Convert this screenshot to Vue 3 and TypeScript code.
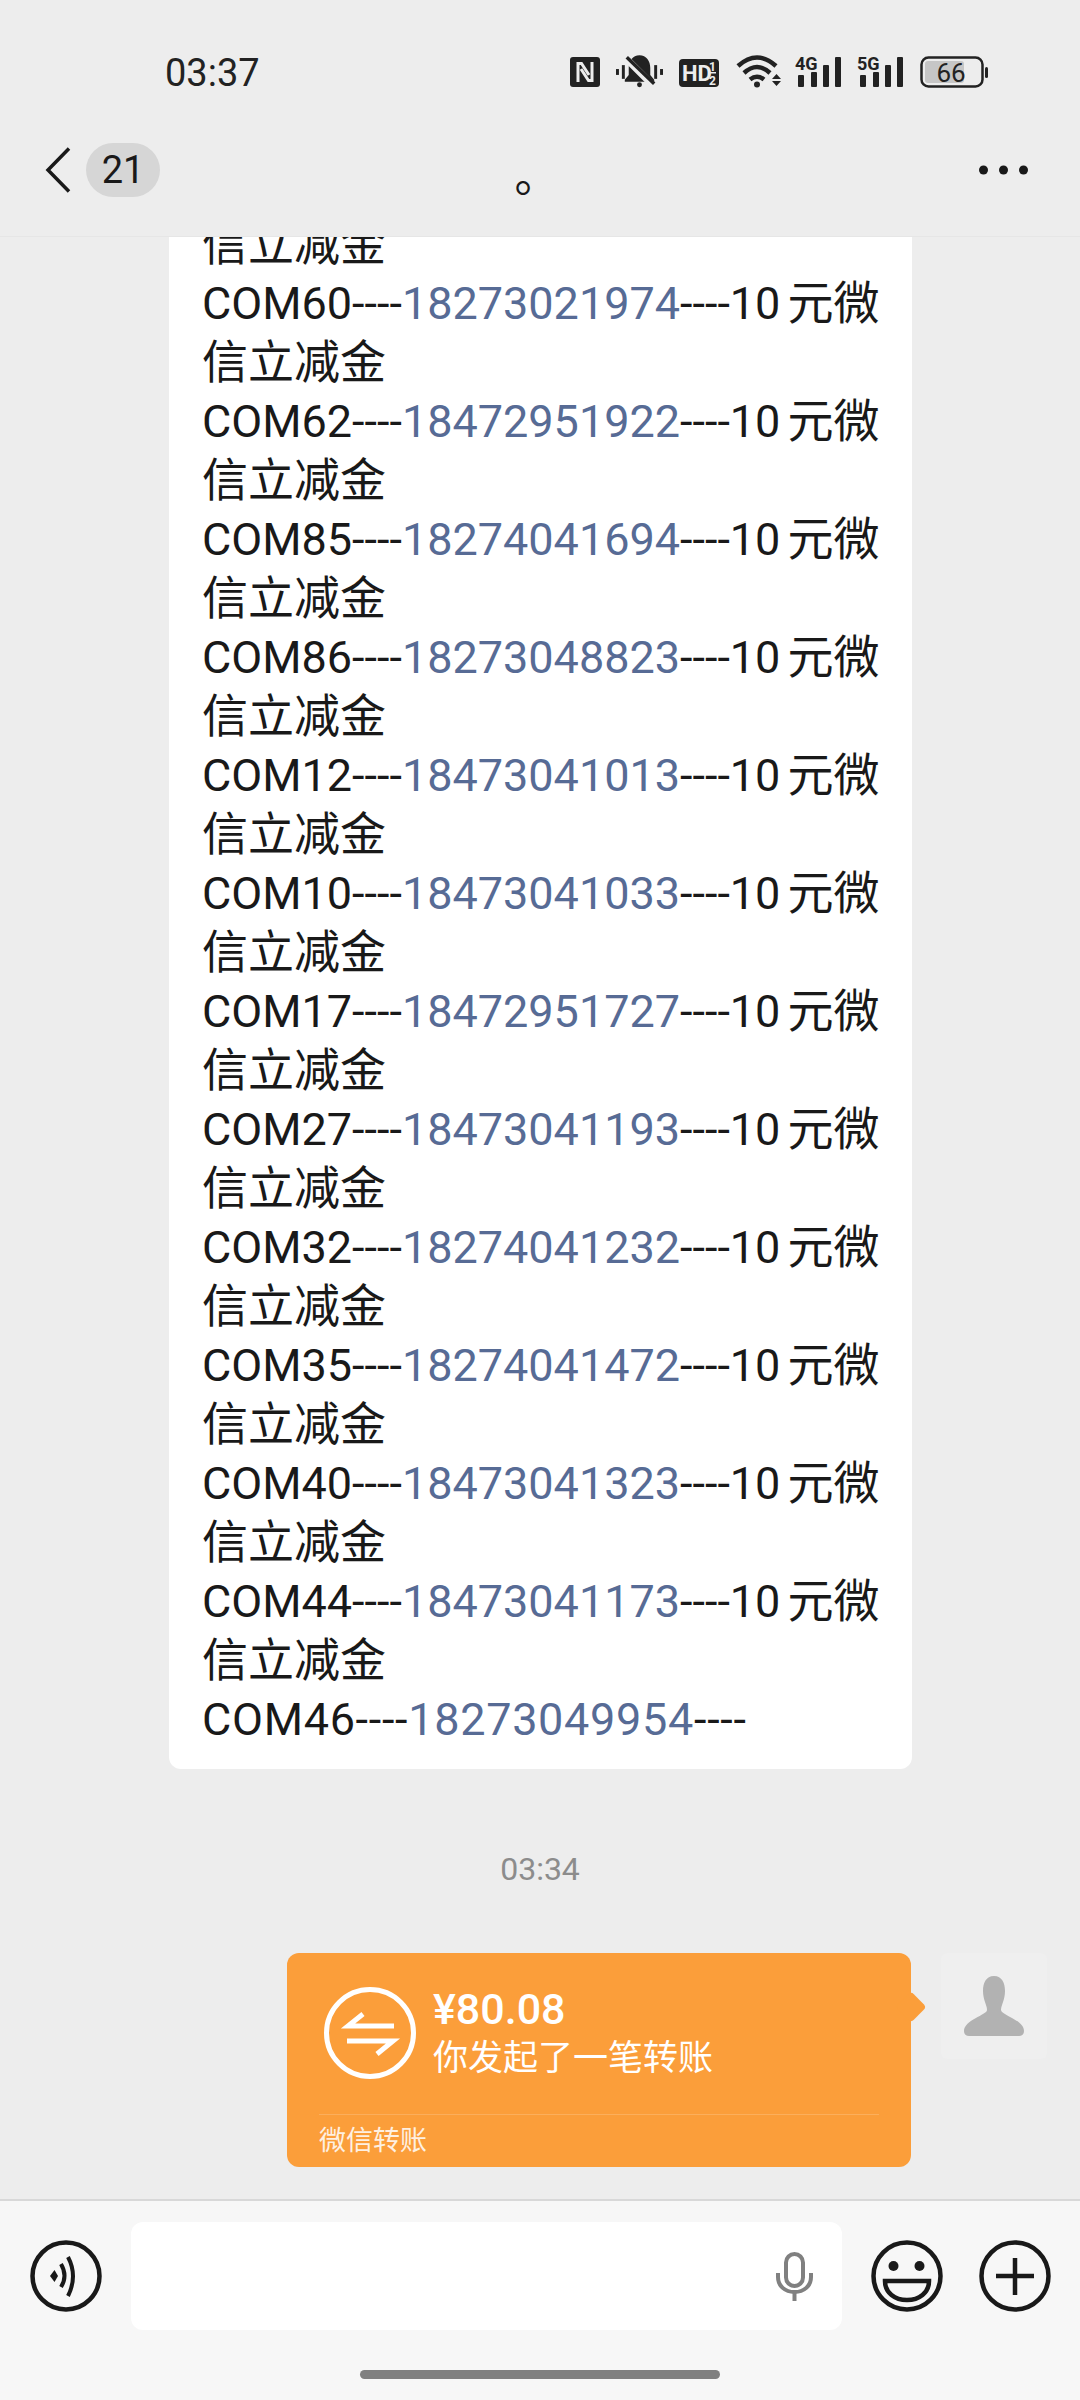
<script setup lang="ts">
interface Row {
  code: string;
  phone: string;
  hasPrize: boolean;
}

const rows: Row[] = [
  { code: "COM59", phone: "", hasPrize: true },
  { code: "COM60", phone: "18273021974", hasPrize: true },
  { code: "COM62", phone: "18472951922", hasPrize: true },
  { code: "COM85", phone: "18274041694", hasPrize: true },
  { code: "COM86", phone: "18273048823", hasPrize: true },
  { code: "COM12", phone: "18473041013", hasPrize: true },
  { code: "COM10", phone: "18473041033", hasPrize: true },
  { code: "COM17", phone: "18472951727", hasPrize: true },
  { code: "COM27", phone: "18473041193", hasPrize: true },
  { code: "COM32", phone: "18274041232", hasPrize: true },
  { code: "COM35", phone: "18274041472", hasPrize: true },
  { code: "COM40", phone: "18473041323", hasPrize: true },
  { code: "COM44", phone: "18473041173", hasPrize: true },
  { code: "COM46", phone: "18273049954", hasPrize: false },
];
</script>

<template>
  <div class="screen">
    <header class="top">
      <div class="status">
        <span class="clock">03:37</span>
        <div class="status-icons">
          <svg width="30" height="34" viewBox="0 0 30 34">
            <rect x="0" y="3" width="30" height="30" rx="3" fill="#222" />
            <path d="M8 28V9.500H11.500L19 21" fill="none" stroke="#ededed" stroke-width="3" />
            <path d="M22 8V26.500H18.500L11 15" fill="none" stroke="#ededed" stroke-width="3" />
          </svg>
          <svg width="47" height="34" viewBox="0 0 48 34">
            <rect x="0" y="15" width="3" height="6" fill="#222" />
            <rect x="6" y="11" width="3" height="14" fill="#222" />
            <rect x="39" y="11" width="3" height="14" fill="#222" />
            <rect x="45" y="15" width="3" height="6" fill="#222" />
            <path d="M24 1C17 1 13 7 13 14V21L9 26V28H39V26L35 21V14C35 7 31 1 24 1Z" fill="#222" />
            <circle cx="24" cy="31" r="2.500" fill="#222" />
            <path d="M10 4L38 32" stroke="#ededed" stroke-width="7" />
            <path d="M11 3L39 30" stroke="#222" stroke-width="3.500" />
          </svg>
          <svg width="40" height="34" viewBox="0 0 40 34">
            <rect x="0" y="5" width="40" height="28" rx="4" fill="#222" />
            <text x="3" y="27" class="hd">HD</text>
            <text x="30" y="17" class="hd-small">1</text>
            <text x="30" y="31" class="hd-small">2</text>
            <rect x="29" y="18" width="8" height="1.500" fill="#ededed" />
          </svg>
          <svg class="wifi" width="47" height="34" viewBox="0 0 47 34">
            <g fill="none" stroke="#222" stroke-width="4.500">
              <path d="M3 12Q22 -5 41 12" />
              <path d="M9 19Q22 7 35 19" />
              <path d="M15 25.500Q22 20 29 25.500" />
            </g>
            <circle cx="22" cy="30.500" r="3" fill="#222" />
            <path d="M37 25H46L41.500 20ZM37 27H46L41.500 32Z" fill="#222" />
          </svg>
          <svg width="46" height="34" viewBox="0 0 46 34">
            <text x="0" y="16" class="net">4G</text>
            <rect x="3" y="21" width="6" height="12" rx="1" fill="#222" />
            <rect x="16" y="18" width="6" height="15" rx="1" fill="#222" />
            <rect x="28" y="11" width="6" height="22" rx="1" fill="#222" />
            <rect x="40" y="3" width="6" height="30" rx="1" fill="#222" />
          </svg>
          <svg width="47" height="34" viewBox="0 0 47 34">
            <text x="0" y="16" class="net">5G</text>
            <rect x="3" y="21" width="6" height="12" rx="1" fill="#222" />
            <rect x="16" y="18" width="6" height="15" rx="1" fill="#222" />
            <rect x="28" y="11" width="6" height="22" rx="1" fill="#222" />
            <rect x="40" y="3" width="6" height="30" rx="1" fill="#222" />
          </svg>
          <svg width="68" height="34" viewBox="0 0 68 34">
            <rect x="5" y="7" width="39" height="22" rx="3" fill="#c6c6c6" />
            <rect x="1.500" y="3.500" width="61" height="29" rx="7" fill="none" stroke="#222" stroke-width="2.500" />
            <rect x="65" y="13" width="3" height="11" rx="1.500" fill="#222" />
            <text x="31" y="28" class="level">66</text>
          </svg>
        </div>
      </div>

      <nav class="nav">
        <div class="nav-left">
          <svg class="back" width="26" height="46" viewBox="0 0 26 46">
            <path d="M24 1.500L3 23L24 44.500" fill="none" stroke="#191919" stroke-width="3.500" />
          </svg>
          <span class="badge">21</span>
        </div>
        <span class="title">。</span>
        <div class="nav-right">
          <svg width="49" height="10" viewBox="0 0 49 10">
            <circle cx="4.500" cy="5" r="4.500" fill="#191919" />
            <circle cx="24.500" cy="5" r="4.500" fill="#191919" />
            <circle cx="44.500" cy="5" r="4.500" fill="#191919" />
          </svg>
        </div>
      </nav>
    </header>

    <main class="chat">
      <div class="bubble">
        <div v-for="row in rows" :key="row.code" class="line" :class="{ 'line-open': !row.hasPrize }">
          <template v-if="row.phone">{{ row.code }}----<span class="link">{{ row.phone }}</span>----</template>
          <template v-if="row.phone && row.hasPrize">10 <span class="cjk">元微信立减金</span></template>
          <span v-if="!row.phone" class="cjk">信立减金</span>
        </div>
      </div>

      <div class="time">03:34</div>

      <div class="me">
        <div class="transfer">
          <div class="transfer-main">
            <svg width="92" height="92" viewBox="0 0 92 92">
              <circle cx="46" cy="46" r="43.500" fill="none" stroke="#fff" stroke-width="5" />
              <path d="M70 39H24L39 27" fill="none" stroke="#fff" stroke-width="5" />
              <path d="M23 54H69L53 67" fill="none" stroke="#fff" stroke-width="5" />
            </svg>
            <div class="transfer-text">
              <div class="amount">¥80.08</div>
              <div class="desc">你发起了一笔转账</div>
            </div>
          </div>
          <div class="transfer-foot">微信转账</div>
        </div>
        <div class="avatar">
          <svg width="60" height="60" viewBox="0 0 60 60">
            <path d="M30 0C22 0 19 7 19 15C19 24 23 29 23 34C23 39 0 44 0 55C0 58 2 60 5 60H55C58 60 60 58 60 55C60 44 37 39 37 34C37 29 41 24 41 15C41 7 38 0 30 0Z" fill="#b2b2b2" />
          </svg>
        </div>
      </div>
    </main>

    <footer class="bar">
      <div class="bar-row">
        <svg width="72" height="72" viewBox="0 0 72 72">
          <circle cx="36" cy="36" r="33.500" fill="none" stroke="#191919" stroke-width="4.500" />
          <path d="M20 36L24.500 30L28 36L24.500 42Z" fill="#191919" />
          <path d="M31 24Q38 36 31 47" fill="none" stroke="#191919" stroke-width="4" />
          <path d="M38 17Q48 36 38 56" fill="none" stroke="#191919" stroke-width="4" />
        </svg>
        <div class="input">
          <svg width="37" height="49" viewBox="0 0 37 49">
            <rect x="10" y="2" width="17" height="32" rx="8.500" fill="none" stroke="#808080" stroke-width="4" />
            <path d="M2 21V25C2 34 9 40 18.500 40C28 40 35 34 35 25V21" fill="none" stroke="#808080" stroke-width="4" />
            <path d="M18.500 40V49" stroke="#808080" stroke-width="4" />
          </svg>
        </div>
        <svg width="72" height="72" viewBox="0 0 72 72">
          <circle cx="36" cy="36" r="33.500" fill="none" stroke="#191919" stroke-width="4.500" />
          <circle cx="22.500" cy="26" r="5" fill="#191919" />
          <circle cx="48.500" cy="26" r="5" fill="#191919" />
          <path d="M14 41H58C58 53 48 60 36 60C24 60 14 53 14 41Z" fill="none" stroke="#191919" stroke-width="4.500" />
        </svg>
        <svg class="plus" width="72" height="72" viewBox="0 0 72 72">
          <circle cx="36" cy="36" r="33.500" fill="none" stroke="#191919" stroke-width="4.500" />
          <path d="M17 36H55M36 18V55" fill="none" stroke="#191919" stroke-width="4.500" />
        </svg>
      </div>
      <div class="home"></div>
    </footer>
  </div>
</template>

<style scoped>
.screen {
  width: 1080px;
  height: 2400px;
  display: flex;
  flex-direction: column;
  overflow: hidden;
  background: #ededed;
  color: #191919;
  font-family: Roboto, "Noto Sans CJK SC", sans-serif;
}

.top {
  flex-shrink: 0;
  height: 237px;
  background: #ededed;
  position: relative;
  z-index: 1;
  border-bottom: 1px solid #e6e6e6;
  box-sizing: border-box;
}

.status {
  height: 104px;
  padding: 55px 92px 0 165px;
  box-sizing: border-box;
  display: flex;
  justify-content: space-between;
  align-items: flex-start;
}

.clock {
  font-size: 38px;
  line-height: 36px;
  color: #222;
}

.status-icons {
  display: flex;
  gap: 16px;
  margin-top: -1px;
}

.wifi {
  margin-right: -3px;
}

.hd {
  font-size: 22px;
  font-weight: 700;
  fill: #ededed;
}

.hd-small {
  font-size: 12px;
  font-weight: 700;
  fill: #ededed;
}

.net {
  font-size: 18px;
  font-weight: 700;
  fill: #222;
}

.level {
  font-size: 26px;
  fill: #222;
  text-anchor: middle;
}

.nav {
  height: 132px;
  display: flex;
  align-items: center;
  padding: 0 52px 0 45px;
  box-sizing: border-box;
}

.nav-left,
.nav-right {
  flex: 1;
  display: flex;
  align-items: center;
}

.nav-right {
  justify-content: flex-end;
}

.badge {
  margin-left: 15px;
  width: 74px;
  height: 54px;
  border-radius: 27px;
  background: #d6d6d6;
  font-size: 38px;
  line-height: 54px;
  text-align: center;
}

.title {
  font-size: 44px;
  line-height: 60px;
  width: 44px;
  text-align: left;
  font-family: "Noto Sans CJK SC", sans-serif;
  position: relative;
  top: 3px;
}

.chat {
  flex: 1;
  min-height: 0;
  overflow: hidden;
  display: flex;
  flex-direction: column;
  justify-content: flex-end;
  padding-bottom: 32px;
}

.bubble {
  flex-shrink: 0;
  margin-left: 169px;
  width: 743px;
  box-sizing: border-box;
  padding: 0 20px 20px 33px;
  background: #fff;
  border-radius: 12px;
  font-size: 45px;
  line-height: 59px;
  word-spacing: -4px;
}

.cjk {
  font-size: 46px;
}

.line-open {
  letter-spacing: 0.7px;
}

.link {
  color: #576b95;
}

.time {
  flex-shrink: 0;
  margin: 80px 0 64px;
  font-size: 32px;
  line-height: 40px;
  text-align: center;
  color: #8c8c8c;
}

.me {
  flex-shrink: 0;
  display: flex;
  align-items: flex-start;
  margin-left: 287px;
}

.transfer {
  position: relative;
  width: 624px;
  height: 214px;
  border-radius: 12px;
  background: #fb9e3a;
  color: #fff;
}

.transfer::after {
  content: "";
  position: absolute;
  top: 43px;
  right: -11px;
  width: 22px;
  height: 22px;
  border-radius: 4px;
  background: #fb9e3a;
  transform: rotate(45deg);
}

.transfer-main {
  height: 161px;
  box-sizing: border-box;
  padding: 34px 0 0 37px;
  display: flex;
  gap: 17px;
}

.amount {
  font-size: 43px;
  line-height: 50px;
  font-weight: 500;
  margin-top: -3px;
}

.desc {
  font-size: 35px;
  line-height: 46px;
  margin-top: 2px;
}

.transfer-foot {
  margin: 0 32px;
  border-top: 1px solid #fcb161;
  font-size: 27px;
  line-height: 52px;
  opacity: 0.85;
}

.avatar {
  margin-left: 30px;
  width: 106px;
  height: 106px;
  display: flex;
  align-items: center;
  justify-content: center;
  background: #efefef;
  border-radius: 6px;
}

.bar {
  flex-shrink: 0;
  height: 201px;
  box-sizing: border-box;
  padding-top: 21px;
  background: #f7f7f7;
  border-top: 2px solid #d8d8d8;
}

.bar-row {
  height: 108px;
  padding-left: 30px;
  display: flex;
  align-items: center;
  gap: 29px;
}

.input {
  width: 711px;
  height: 108px;
  padding-right: 29px;
  box-sizing: border-box;
  display: flex;
  align-items: center;
  justify-content: flex-end;
  background: #fff;
  border-radius: 12px;
}

.plus {
  margin-left: 7px;
}

.home {
  width: 360px;
  height: 9px;
  margin: 40px auto 0;
  border-radius: 5px;
  background: #808080;
}
</style>

<style>
body {
  background: #ededed;
}
</style>
